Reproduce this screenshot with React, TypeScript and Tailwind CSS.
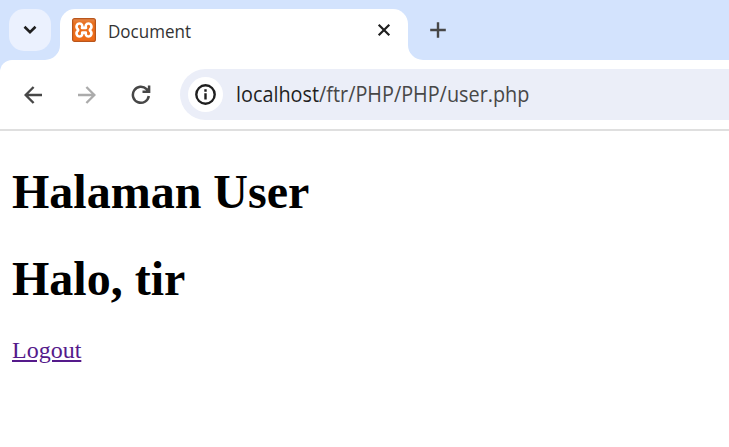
import React from 'react';

function Favicon() {
  return (
    <svg width="24" height="24" viewBox="0 0 24 24" className="shrink-0">
      <defs>
        <linearGradient id="shine" x1="0" y1="0" x2="0" y2="1">
          <stop offset="0" stopColor="#e58b4f" />
          <stop offset="0.2" stopColor="#e9701f" />
          <stop offset="1" stopColor="#f06c18" />
        </linearGradient>
      </defs>
      <rect x="0.6" y="0.6" width="22.8" height="22.8" rx="2" fill="url(#shine)" stroke="#b9561c" strokeWidth="1.2" />
      <path
        d="M10 9.9C10.9 7.5 9.8 5.5 7.7 5.5C4.6 5.5 3.4 9.3 5.9 11.2Q6.5 12 5.9 12.8C3.4 14.7 4.6 18.5 7.7 18.5C9.8 18.5 10.5 16.8 10.2 14.6H13.8C13.5 16.8 14.2 18.5 16.3 18.5C19.4 18.5 20.6 14.7 18.1 12.8Q17.5 12 18.1 11.2C20.6 9.3 19.4 5.5 16.3 5.5C14.2 5.5 13.1 7.5 14 9.9Z"
        fill="none"
        stroke="#fff"
        strokeWidth="2.6"
        strokeLinejoin="round"
      />
    </svg>
  );
}

function TabStrip() {
  return (
    <header className="flex h-[60px] bg-[#d3e3fd] pl-[9px] pt-[9px]">
      <button className="flex size-[42px] items-center justify-center rounded-[15px] bg-[#ebf1fe]" aria-label="Search tabs">
        <svg width="14" height="10" viewBox="0 0 14 10" fill="none" stroke="#1f1f1f" strokeWidth="2.6">
          <path d="M1.5 1.8 7 7.2l5.5-5.4" />
        </svg>
      </button>
      <div className="relative ml-[9px] flex h-[51px] w-[348px] items-center rounded-t-[15px] bg-white pb-[9px] pl-3 pr-[17px]">
        <svg className="absolute -left-[15px] bottom-0" width="15" height="15" viewBox="0 0 15 15">
          <path d="M15 0A15 15 0 0 1 0 15h15z" fill="#fff" />
        </svg>
        <svg className="absolute -right-[15px] bottom-0" width="15" height="15" viewBox="0 0 15 15">
          <path d="M0 0a15 15 0 0 0 15 15H0z" fill="#fff" />
        </svg>
        <Favicon />
        <span className="ml-3 mt-px flex-1 font-['Open_Sans','Noto_Sans',sans-serif] text-[18px] leading-6 text-[#333]">
          <span className="inline-block origin-left scale-x-[0.945]">Document</span>
        </span>
        <svg width="14" height="14" viewBox="0 0 14 14" fill="none" stroke="#1f1f1f" strokeWidth="2.2">
          <path d="M1.7 1.7l10.6 10.6M12.3 1.7 1.7 12.3" />
        </svg>
      </div>
      <button className="ml-[22px] flex h-[42px] items-center" aria-label="New tab">
        <svg width="16" height="16" viewBox="0 0 16 16" fill="none" stroke="#474747" strokeWidth="2.4">
          <path d="M8 .2v15.6M.2 8h15.6" />
        </svg>
      </button>
    </header>
  );
}

function Toolbar() {
  return (
    <div className="bg-[#d3e3fd]">
      <nav className="flex h-[71px] items-center rounded-tl-[12px] border-b-2 border-[#dfdfdf] bg-white pl-6">
        <svg width="18" height="18" viewBox="0 0 18 18" fill="none" stroke="#474747" strokeWidth="2.4">
          <path d="M18 9H1.7M9.6 1 1.6 9l8 8" />
        </svg>
        <svg className="ml-9" width="18" height="18" viewBox="0 0 18 18" fill="none" stroke="#ababab" strokeWidth="2.4">
          <path d="M0 9h16.3M8.4 1l8 8-8 8" />
        </svg>
        <svg className="ml-[35px]" width="20" height="20" viewBox="0 0 20 20" fill="none" stroke="#474747" strokeWidth="2.5">
          <path d="M17.8 11A8 8 0 1 1 15.6 4.2l2 2.2M18.1.6v6.2h-6.6" />
        </svg>
        <div className="ml-[29px] flex h-[51px] flex-1 items-center rounded-l-full bg-[#ebeef8] pl-2">
          <span className="flex size-[35px] items-center justify-center rounded-full bg-white">
            <svg width="21" height="21" viewBox="0 0 21 21" fill="none" stroke="#1f1f1f" strokeWidth="2.4">
              <circle cx="10.5" cy="10.5" r="9.2" />
              <path d="M10.5 9.3v6.2M10.5 5.3v2.4" />
            </svg>
          </span>
          <span className="-mt-px ml-[13px] whitespace-nowrap font-['Open_Sans','Noto_Sans',sans-serif] text-[21px] leading-7 text-[#474747]">
            <span className="inline-block origin-left scale-x-[0.944]">
              <span className="text-[#1f1f1f]">localhost</span>/ftr/PHP/PHP/user.php
            </span>
          </span>
        </div>
      </nav>
    </div>
  );
}

export default function App() {
  return (
    <div className="h-[447px] w-[729px] overflow-hidden bg-white">
      <TabStrip />
      <Toolbar />
      <main className="px-3 pt-[33px] font-['Liberation_Serif','Times_New_Roman',serif] text-black">
        <h1 className="mb-8 text-[48px] font-bold leading-[55px]">Halaman User</h1>
        <h1 className="mb-[31px] text-[48px] font-bold leading-[55px]">Halo, tir</h1>
        <a href="#" className="block w-fit text-[24px] leading-[27px] text-[#551a8b] underline">
          Logout
        </a>
      </main>
    </div>
  );
}
